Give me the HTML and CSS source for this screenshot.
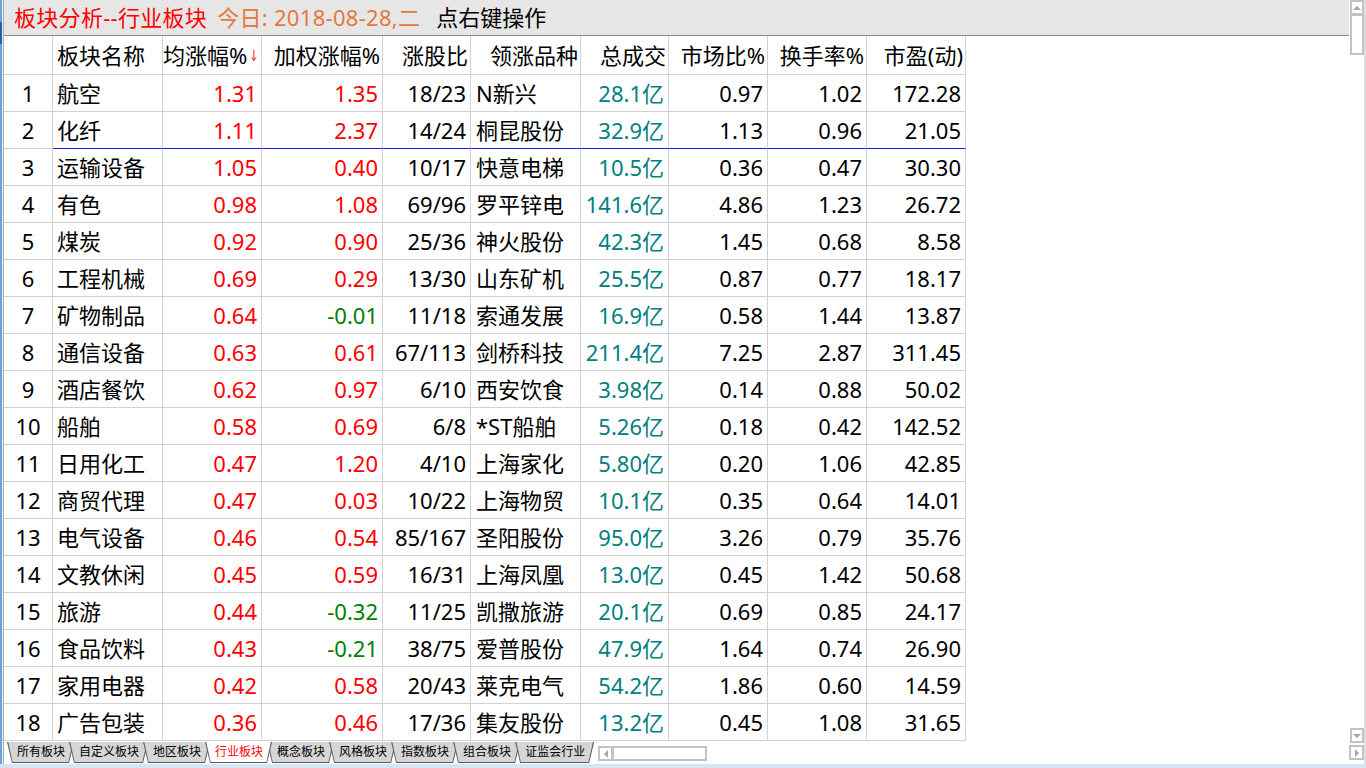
FILE: index.html
```html
<!DOCTYPE html>
<html lang="zh-CN">
<head>
<meta charset="utf-8">
<title>板块分析--行业板块</title>
<link rel="stylesheet" href="styles.css">
</head>
<body>
<div class="app">
  <div class="top">
    <div class="main">
      <div class="strip"></div>
      <div class="content">
        <div class="titlebar">
          <span class="t-red">板块分析--行业板块</span>
          <span class="t-orange">今日: 2018-08-28,二</span>
          <span class="t-black">点右键操作</span>
        </div>
        <div class="grid">
          <div class="c h num"></div>
          <div class="c h name">板块名称</div>
          <div class="c h">均涨幅%<svg class="sort" width="7" height="15" viewBox="0 0 7 15"><path d="M3.5 0.5 V13.5 M0.8 9.8 L3.5 13.8 L6.2 9.8" fill="none" stroke="#ff0000" stroke-width="1.1"/></svg></div>
          <div class="c h">加权涨幅%</div>
          <div class="c h">涨股比</div>
          <div class="c h">领涨品种</div>
          <div class="c h">总成交</div>
          <div class="c h">市场比%</div>
          <div class="c h">换手率%</div>
          <div class="c h">市盈(动)</div>

          <div class="c num">1</div><div class="c name">航空</div><div class="c red">1.31</div><div class="c red">1.35</div><div class="c">18/23</div><div class="c lead">N新兴</div><div class="c teal">28.1亿</div><div class="c">0.97</div><div class="c">1.02</div><div class="c">172.28</div>

          <div class="c num">2</div><div class="c name sel">化纤</div><div class="c red sel">1.11</div><div class="c red sel">2.37</div><div class="c sel">14/24</div><div class="c lead sel">桐昆股份</div><div class="c teal sel">32.9亿</div><div class="c sel">1.13</div><div class="c sel">0.96</div><div class="c sel">21.05</div>

          <div class="c num">3</div><div class="c name">运输设备</div><div class="c red">1.05</div><div class="c red">0.40</div><div class="c">10/17</div><div class="c lead">快意电梯</div><div class="c teal">10.5亿</div><div class="c">0.36</div><div class="c">0.47</div><div class="c">30.30</div>

          <div class="c num">4</div><div class="c name">有色</div><div class="c red">0.98</div><div class="c red">1.08</div><div class="c">69/96</div><div class="c lead">罗平锌电</div><div class="c teal">141.6亿</div><div class="c">4.86</div><div class="c">1.23</div><div class="c">26.72</div>

          <div class="c num">5</div><div class="c name">煤炭</div><div class="c red">0.92</div><div class="c red">0.90</div><div class="c">25/36</div><div class="c lead">神火股份</div><div class="c teal">42.3亿</div><div class="c">1.45</div><div class="c">0.68</div><div class="c">8.58</div>

          <div class="c num">6</div><div class="c name">工程机械</div><div class="c red">0.69</div><div class="c red">0.29</div><div class="c">13/30</div><div class="c lead">山东矿机</div><div class="c teal">25.5亿</div><div class="c">0.87</div><div class="c">0.77</div><div class="c">18.17</div>

          <div class="c num">7</div><div class="c name">矿物制品</div><div class="c red">0.64</div><div class="c green">-0.01</div><div class="c">11/18</div><div class="c lead">索通发展</div><div class="c teal">16.9亿</div><div class="c">0.58</div><div class="c">1.44</div><div class="c">13.87</div>

          <div class="c num">8</div><div class="c name">通信设备</div><div class="c red">0.63</div><div class="c red">0.61</div><div class="c">67/113</div><div class="c lead">剑桥科技</div><div class="c teal">211.4亿</div><div class="c">7.25</div><div class="c">2.87</div><div class="c">311.45</div>

          <div class="c num">9</div><div class="c name">酒店餐饮</div><div class="c red">0.62</div><div class="c red">0.97</div><div class="c">6/10</div><div class="c lead">西安饮食</div><div class="c teal">3.98亿</div><div class="c">0.14</div><div class="c">0.88</div><div class="c">50.02</div>

          <div class="c num">10</div><div class="c name">船舶</div><div class="c red">0.58</div><div class="c red">0.69</div><div class="c">6/8</div><div class="c lead">*ST船舶</div><div class="c teal">5.26亿</div><div class="c">0.18</div><div class="c">0.42</div><div class="c">142.52</div>

          <div class="c num">11</div><div class="c name">日用化工</div><div class="c red">0.47</div><div class="c red">1.20</div><div class="c">4/10</div><div class="c lead">上海家化</div><div class="c teal">5.80亿</div><div class="c">0.20</div><div class="c">1.06</div><div class="c">42.85</div>

          <div class="c num">12</div><div class="c name">商贸代理</div><div class="c red">0.47</div><div class="c red">0.03</div><div class="c">10/22</div><div class="c lead">上海物贸</div><div class="c teal">10.1亿</div><div class="c">0.35</div><div class="c">0.64</div><div class="c">14.01</div>

          <div class="c num">13</div><div class="c name">电气设备</div><div class="c red">0.46</div><div class="c red">0.54</div><div class="c">85/167</div><div class="c lead">圣阳股份</div><div class="c teal">95.0亿</div><div class="c">3.26</div><div class="c">0.79</div><div class="c">35.76</div>

          <div class="c num">14</div><div class="c name">文教休闲</div><div class="c red">0.45</div><div class="c red">0.59</div><div class="c">16/31</div><div class="c lead">上海凤凰</div><div class="c teal">13.0亿</div><div class="c">0.45</div><div class="c">1.42</div><div class="c">50.68</div>

          <div class="c num">15</div><div class="c name">旅游</div><div class="c red">0.44</div><div class="c green">-0.32</div><div class="c">11/25</div><div class="c lead">凯撒旅游</div><div class="c teal">20.1亿</div><div class="c">0.69</div><div class="c">0.85</div><div class="c">24.17</div>

          <div class="c num">16</div><div class="c name">食品饮料</div><div class="c red">0.43</div><div class="c green">-0.21</div><div class="c">38/75</div><div class="c lead">爱普股份</div><div class="c teal">47.9亿</div><div class="c">1.64</div><div class="c">0.74</div><div class="c">26.90</div>

          <div class="c num">17</div><div class="c name">家用电器</div><div class="c red">0.42</div><div class="c red">0.58</div><div class="c">20/43</div><div class="c lead">莱克电气</div><div class="c teal">54.2亿</div><div class="c">1.86</div><div class="c">0.60</div><div class="c">14.59</div>

          <div class="c num">18</div><div class="c name">广告包装</div><div class="c red">0.36</div><div class="c red">0.46</div><div class="c">17/36</div><div class="c lead">集友股份</div><div class="c teal">13.2亿</div><div class="c">0.45</div><div class="c">1.08</div><div class="c">31.65</div>
        </div>
        <div class="spacer"></div>
        <div class="tabbar">
          <div class="tabs">
            <div class="tab"><span>所有板块</span></div>
            <div class="tab"><span>自定义板块</span></div>
            <div class="tab"><span>地区板块</span></div>
            <div class="tab active"><span>行业板块</span></div>
            <div class="tab"><span>概念板块</span></div>
            <div class="tab"><span>风格板块</span></div>
            <div class="tab"><span>指数板块</span></div>
            <div class="tab"><span>组合板块</span></div>
            <div class="tab"><span>证监会行业</span></div>
          </div>
          <div class="hscroll">
            <div class="sbtn"><i class="tri-left"></i></div>
            <div class="hthumb"></div>
          </div>
        </div>
      </div>
    </div>
    <div class="vscroll">
      <div class="sbtn"><i class="tri-up"></i></div>
      <div class="vthumb"></div>
      <div class="vtrack"></div>
      <div class="sbtn"><i class="tri-down"></i></div>
      <div class="sbtn right-btn"><i class="tri-right"></i></div>
    </div>
    <div class="edge"></div>
  </div>
  <div class="bottomstrip"></div>
</div>
</body>
</html>
```

FILE: styles.css
```css
* { box-sizing: border-box; }
html, body { margin: 0; padding: 0; background: #ffffff; }
body {
  font-family: "Noto Sans", "Noto Sans CJK SC", sans-serif;
  color: #000;
}
.app {
  width: 1366px;
  height: 768px;
  display: flex;
  flex-direction: column;
  overflow: hidden;
}
.top {
  display: flex;
  height: 764px;
}
.main {
  width: 1349px;
  display: flex;
}
.strip {
  width: 4px;
  background:
    linear-gradient(to bottom, #6aa3da 0, #6aa3da 22px, #1f62ad 22px, #1f62ad 44px, #6aa3da 44px) 0 0 / 2px 100% no-repeat,
    linear-gradient(to right, #eef3f9 0, #eef3f9 3px, #a9a9a9 3px, #a9a9a9 4px);
}
.content {
  flex: 1;
  display: flex;
  flex-direction: column;
  min-width: 0;
}
.titlebar {
  height: 36px;
  background: #e6e6e6;
  border-bottom: 1px solid #8c8c8c;
  padding-left: 10px;
  display: flex;
  align-items: center;
  font-size: 22px;
  line-height: 35px;
  white-space: nowrap;
}
.t-red { color: #ff0000; letter-spacing: 0.3px; }
.t-orange { color: #e3783a; margin-left: 10px; letter-spacing: 0.3px; }
.t-black { color: #000; margin-left: 16px; }

.grid {
  display: grid;
  grid-template-columns: 49px 110px 99px 121px 88px 110px 88px 99px 99px 99px;
  width: 962px;
}
.c {
  height: 37px;
  border-right: 1px solid #d2d2d2;
  border-bottom: 1px solid #d2d2d2;
  display: flex;
  align-items: center;
  justify-content: flex-end;
  padding-right: 4px;
  font-size: 22px;
  line-height: 30px;
  white-space: nowrap;
}
.c.h {
  height: 39px;
  padding-right: 2px;
}
.c.num {
  justify-content: center;
  padding-right: 0;
}
.c.name {
  justify-content: flex-start;
  padding-left: 4px;
}
.c.lead {
  justify-content: flex-start;
  padding-left: 5px;
}
.c.sel { border-bottom-color: #2020e6; }
.red { color: #ff0000; }
.green { color: #008000; }
.teal { color: #008080; }
.sort { margin-left: 4px; margin-right: 2px; }

.spacer { flex: 1; }

.tabbar {
  height: 23px;
  display: flex;
  align-items: flex-start;
  background: #ffffff;
}
.tabs {
  display: flex;
  padding-left: 8px;
  padding-top: 1px;
}
.tab {
  position: relative;
  z-index: 1;
  height: 21px;
  margin-left: -5px;
  padding: 0 9px 0 10px;
  background: #5a5a5a;
  clip-path: polygon(0 0, 100% 0, calc(100% - 5px) 100%, 5px 100%);
  font-size: 12px;
  line-height: 20px;
  color: #000;
  white-space: nowrap;
}
.tab::before {
  content: "";
  position: absolute;
  inset: 0;
  background: #d6d6d6;
  clip-path: polygon(1.2px 0, calc(100% - 1.2px) 0, calc(100% - 5.6px) calc(100% - 1px), 5.6px calc(100% - 1px));
}
.tab span { position: relative; }
.tab.active { z-index: 2; color: #ff0000; }
.tab.active::before { background: #ffffff; }

.hscroll {
  display: flex;
  margin-left: 4px;
  margin-top: 5px;
}
.sbtn {
  width: 15px;
  height: 15px;
  border: 2px solid #c3c3c3;
  background: #fff;
  display: flex;
  align-items: center;
  justify-content: center;
}
.hthumb {
  width: 94px;
  height: 15px;
  border: 2px solid #c3c3c3;
  border-left-width: 1px;
  background: #fff;
}
.vscroll {
  width: 15px;
  display: flex;
  flex-direction: column;
  padding-left: 1px;
}
.vscroll .sbtn { width: 14px; height: 15px; }
.vthumb {
  width: 14px;
  height: 40px;
  border: 2px solid #c3c3c3;
  border-top-width: 1px;
  background: #fff;
}
.vtrack { flex: 1; }
.vscroll .right-btn {
  margin-top: 2px;
  margin-bottom: 4px;
  margin-left: -1px;
  width: 15px;
}
.edge {
  width: 2px;
  background: #dedede;
}
.bottomstrip {
  height: 4px;
  background: #d7e4f2;
}
.tri-up, .tri-down, .tri-left, .tri-right {
  display: block;
  width: 0;
  height: 0;
}
.tri-up {
  border-left: 4px solid transparent;
  border-right: 4px solid transparent;
  border-bottom: 4px solid #a6a6a6;
}
.tri-down {
  border-left: 4px solid transparent;
  border-right: 4px solid transparent;
  border-top: 4px solid #a6a6a6;
}
.tri-left {
  border-top: 4px solid transparent;
  border-bottom: 4px solid transparent;
  border-right: 4px solid #a6a6a6;
}
.tri-right {
  border-top: 4px solid transparent;
  border-bottom: 4px solid transparent;
  border-left: 4px solid #a6a6a6;
}
```
